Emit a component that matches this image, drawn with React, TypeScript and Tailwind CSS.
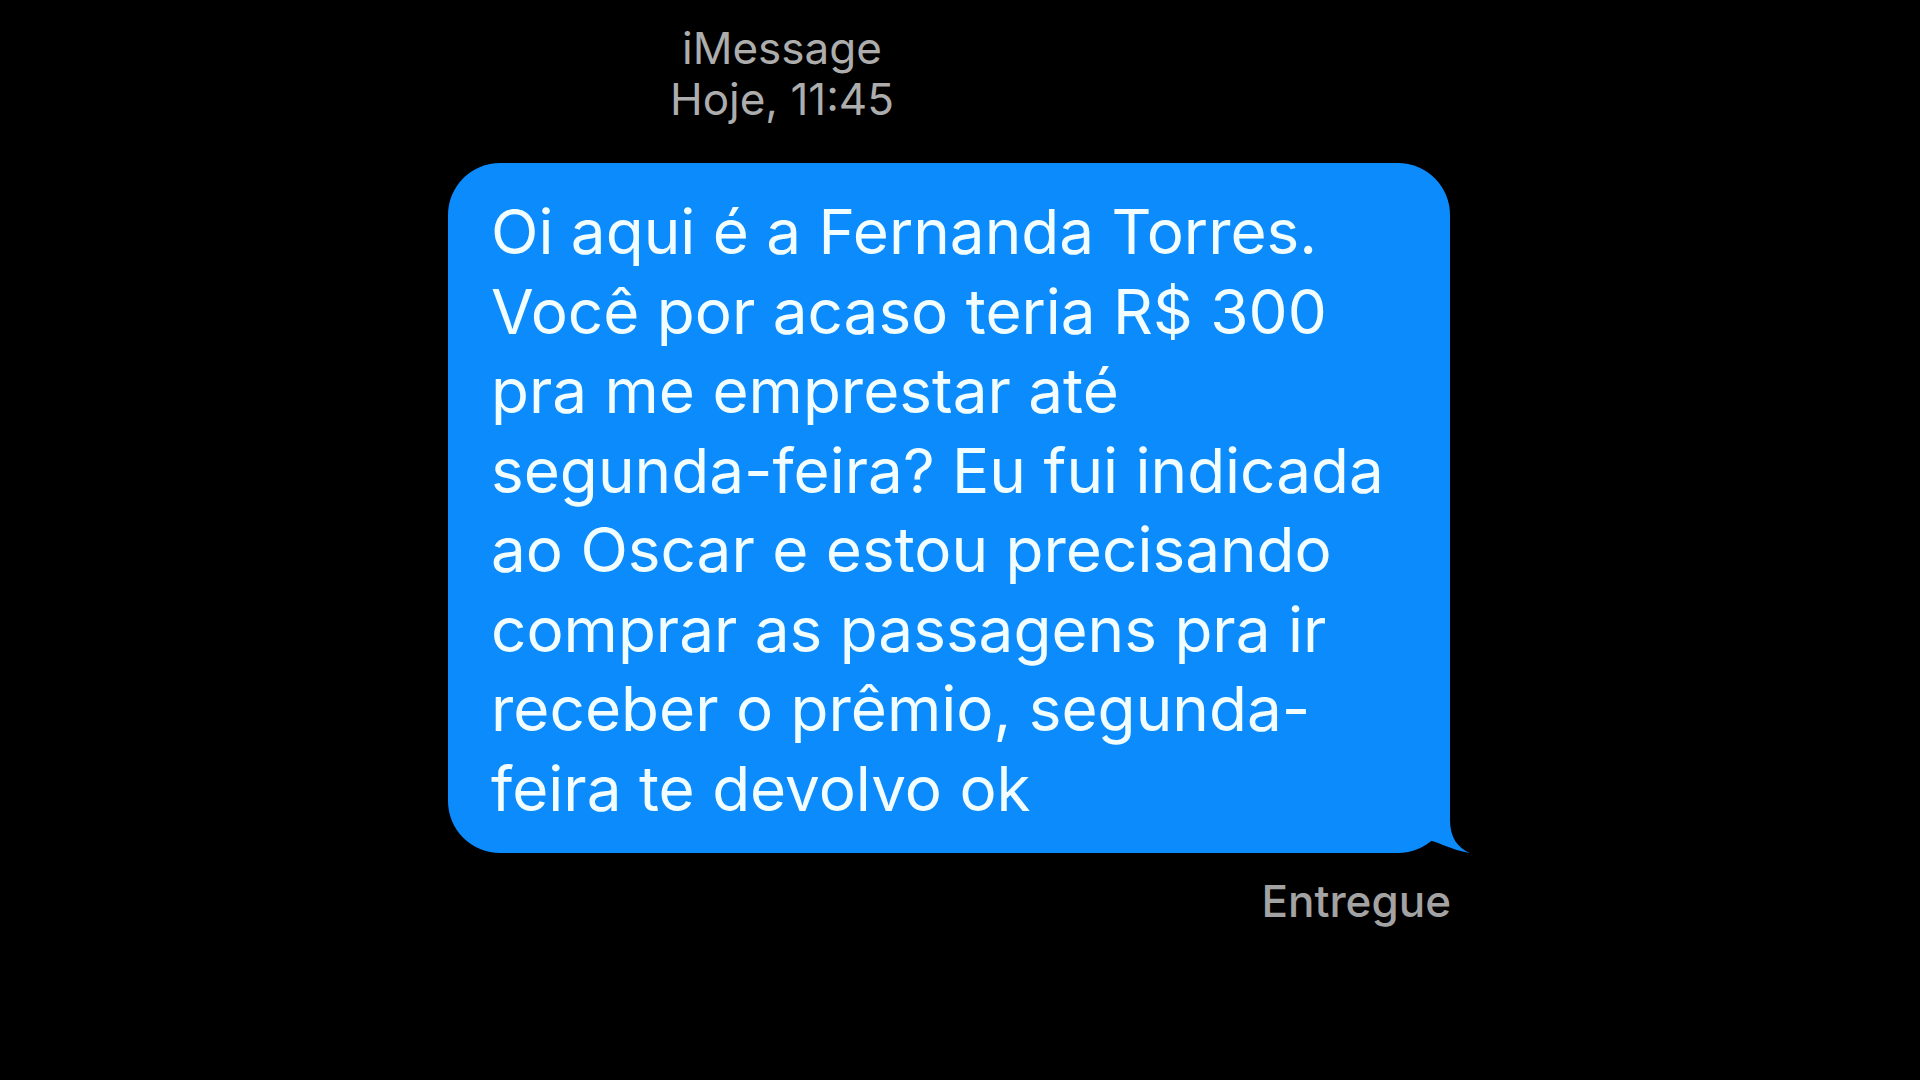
const lines = [
  "Oi aqui é a Fernanda Torres.",
  "Você por acaso teria R$ 300",
  "pra me emprestar até",
  "segunda-feira? Eu fui indicada",
  "ao Oscar e estou precisando",
  "comprar as passagens pra ir",
  "receber o prêmio, segunda-",
  "feira te devolvo ok",
];

const BubbleTail = () => (
  <svg
    className="absolute right-[-25px] bottom-[-3px]"
    width="95"
    height="66"
    viewBox="0 0 95 66"
  >
    <path
      d="M0 63 L13 63 C28 63 37 50 45 50 C56 50 70 60 90 63 C78 58 70 48 70 30 L70 0 L0 0 Z"
      fill="#0b8bfc"
    />
  </svg>
);

export default function App() {
  return (
    <div className="min-h-screen w-full bg-black font-['Inter','Noto_Sans',sans-serif]">
      <div className="flex flex-col pl-[448px] pt-[23px]">
        <div className="w-[668px] text-center text-[44px] leading-[51px] text-[#adadad]">
          <div>iMessage</div>
          <div>Hoje, 11:45</div>
        </div>

        <div className="relative mt-[38px] w-[1002px] rounded-[52px] bg-[#0b8bfc] pl-[43px] pt-[29px] pb-[25px]">
          {lines.map((line) => {
            return (
              <div
                key={line}
                className="whitespace-nowrap text-[62px] leading-[79.5px] text-[#f2fdff]"
              >
                {line}
              </div>
            );
          })}
          <BubbleTail />
        </div>

        <div className="mt-[22px] w-[1003px] text-right text-[44px] font-medium leading-[52px] text-[#a3a3a3]">
          Entregue
        </div>
      </div>
    </div>
  );
}
